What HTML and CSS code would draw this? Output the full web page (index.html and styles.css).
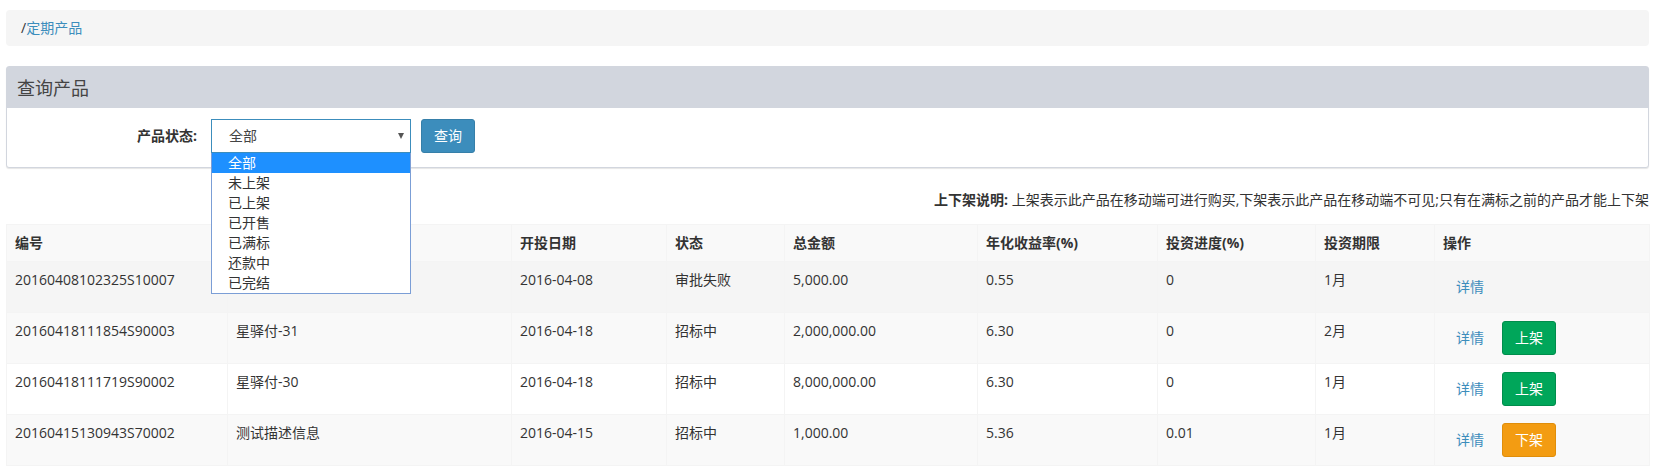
FILE: index.html
```html
<!DOCTYPE html>
<html lang="zh-CN">
<head>
<meta charset="utf-8">
<title>定期产品</title>
<link rel="stylesheet" href="styles.css">
</head>
<body>
<div class="page">
  <ol class="breadcrumb"><li>/<a href="#">定期产品</a></li></ol>

  <div class="box">
    <div class="box-header"><h3 class="box-title">查询产品</h3></div>
    <div class="box-body">
      <form class="search-form">
        <label class="form-label">产品状态:</label>
        <div class="select-wrap">
          <div class="select"><span>全部</span><i class="caret"></i></div>
          <ul class="select-list">
            <li class="active">全部</li>
            <li>未上架</li>
            <li>已上架</li>
            <li>已开售</li>
            <li>已满标</li>
            <li>还款中</li>
            <li>已完结</li>
          </ul>
        </div>
        <button type="button" class="btn btn-primary">查询</button>
      </form>
    </div>
  </div>

  <p class="note"><b>上下架说明:</b> 上架表示此产品在移动端可进行购买,下架表示此产品在移动端不可见;只有在满标之前的产品才能上下架</p>

  <table class="table">
    <colgroup>
      <col class="c1"><col class="c2"><col class="c3"><col class="c4"><col class="c5"><col class="c6"><col class="c7"><col class="c8"><col class="c9">
    </colgroup>
    <thead>
      <tr>
        <th>编号</th><th></th><th>开投日期</th><th>状态</th><th>总金额</th><th>年化收益率(%)</th><th>投资进度(%)</th><th>投资期限</th><th>操作</th>
      </tr>
    </thead>
    <tbody>
      <tr class="row-hover">
        <td>20160408102325S10007</td><td></td><td>2016-04-08</td><td>审批失败</td><td>5,000.00</td><td>0.55</td><td>0</td><td>1月</td>
        <td><div class="ops"><a href="#" class="btn btn-link">详情</a></div></td>
      </tr>
      <tr class="row-striped">
        <td>20160418111854S90003</td><td>星驿付-31</td><td>2016-04-18</td><td>招标中</td><td>2,000,000.00</td><td>6.30</td><td>0</td><td>2月</td>
        <td><div class="ops"><a href="#" class="btn btn-link">详情</a><button type="button" class="btn btn-success">上架</button></div></td>
      </tr>
      <tr class="row-plain">
        <td>20160418111719S90002</td><td>星驿付-30</td><td>2016-04-18</td><td>招标中</td><td>8,000,000.00</td><td>6.30</td><td>0</td><td>1月</td>
        <td><div class="ops"><a href="#" class="btn btn-link">详情</a><button type="button" class="btn btn-success">上架</button></div></td>
      </tr>
      <tr class="row-striped">
        <td>20160415130943S70002</td><td>测试描述信息</td><td>2016-04-15</td><td>招标中</td><td>1,000.00</td><td>5.36</td><td>0.01</td><td>1月</td>
        <td><div class="ops"><a href="#" class="btn btn-link">详情</a><button type="button" class="btn btn-warning">下架</button></div></td>
      </tr>
    </tbody>
  </table>
</div>
</body>
</html>
```

FILE: styles.css
```css
* { box-sizing: border-box; }
html, body { margin: 0; background: #fff; }
body {
  font-family: "Open Sans", "Noto Sans CJK SC", sans-serif;
  font-size: 14px;
  line-height: 20px;
  color: #333;
}
.page { padding: 10px 11px 0 6px; }

.breadcrumb {
  margin: 0 0 20px;
  padding: 8px 15px;
  list-style: none;
  background: #f5f5f5;
  border-radius: 4px;
  height: 36px;
}
.breadcrumb a { color: #3c8dbc; text-decoration: none; }

.box {
  border: 1px solid #d2d6de;
  border-radius: 3px;
  box-shadow: 0 1px 1px rgba(0, 0, 0, 0.1);
  background: #fff;
}
.box-header {
  background: #d2d6de;
  height: 41px;
  padding: 0 10px;
  display: flex;
  align-items: center;
}
.box-title {
  margin: 0;
  font-size: 18px;
  font-weight: normal;
  color: #444;
  line-height: 22px;
}
.box-body { padding: 11px 10px 14px; }

.search-form { display: flex; align-items: center; margin: 0; }
.form-label {
  width: 180px;
  text-align: right;
  font-weight: bold;
  margin-right: 14px;
}
.select-wrap { position: relative; width: 200px; }
.select {
  height: 34px;
  border: 1px solid #3c8dbc;
  background: #fff;
  padding: 0 6px 0 17px;
  display: flex;
  align-items: center;
  justify-content: space-between;
  color: #444;
}
.caret {
  width: 0;
  height: 0;
  border-left: 3.5px solid transparent;
  border-right: 3.5px solid transparent;
  border-top: 6px solid #555;
}
.select-list {
  position: absolute;
  top: 100%;
  left: 0;
  width: 200px;
  margin: 0;
  padding: 0;
  list-style: none;
  background: #fff;
  border: 1px solid #7b9ed6;
  border-top: 0;
  z-index: 10;
}
.select-list li {
  height: 20px;
  line-height: 20px;
  padding-left: 16px;
  color: #333;
}
.select-list li.active { background: #1e90ff; color: #fff; }

.btn {
  display: inline-block;
  height: 34px;
  padding: 6px 12px;
  font-family: inherit;
  font-size: 14px;
  line-height: 20px;
  border: 1px solid transparent;
  border-radius: 3px;
  text-decoration: none;
  white-space: nowrap;
  cursor: pointer;
}
.btn-primary { background: #3c8dbc; border-color: #367fa9; color: #fff; margin-left: 10px; }
.btn-success { background: #00a65a; border-color: #008d4c; color: #fff; }
.btn-warning { background: #f39c12; border-color: #e08e0b; color: #fff; }
.btn-link { background: transparent; color: #3c8dbc; }

.note { margin: 22px 0 14px; text-align: right; }

.table {
  width: 100%;
  border-collapse: collapse;
  table-layout: fixed;
}
.table th, .table td {
  padding: 8px;
  border: 1px solid #f4f4f4;
  text-align: left;
  vertical-align: top;
  white-space: nowrap;
}
.table th { font-weight: bold; }
.table thead tr { background: #f9f9f9; }
.row-hover { background: #f5f5f5; }
.row-striped { background: #f9f9f9; }
.row-plain { background: #fff; }
.ops { display: flex; align-items: center; gap: 5px; }

.c1 { width: 221px; }
.c2 { width: 284px; }
.c3 { width: 155px; }
.c4 { width: 118px; }
.c5 { width: 193px; }
.c6 { width: 180px; }
.c7 { width: 158px; }
.c8 { width: 119px; }
.c9 { width: 215px; }
```
